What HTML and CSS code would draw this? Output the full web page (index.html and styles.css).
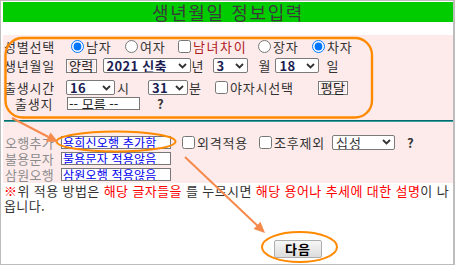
FILE: index.html
```html
<!DOCTYPE html>
<html lang="ko">
<head>
<meta charset="utf-8">
<title>생년월일 정보입력</title>
<link rel="stylesheet" href="styles.css">
</head>
<body>
<div class="frame">
  <div class="title">생년월일 정보입력</div>
  <div class="spacer"></div>
  <div class="panel">
    <div class="upper">
      <div class="row r1">
        <span class="lbl">성별선택</span>
        <div class="opts">
          <label class="opt"><input type="radio" name="sex" checked><span>남자</span></label>
          <label class="opt"><input type="radio" name="sex"><span>여자</span></label>
          <label class="opt"><input type="checkbox"><span class="dred">남녀차이</span></label>
          <label class="opt"><input type="radio" name="order"><span>장자</span></label>
          <label class="opt"><input type="radio" name="order" checked><span>차자</span></label>
        </div>
      </div>
      <div class="row r2">
        <span class="lbl">생년월일</span>
        <span class="tag">양력</span>
        <select class="sel s-year ml6"><option selected>2021 신축</option><option>2020 경자</option></select>
        <span class="unit ml1">년</span>
        <select class="sel s-mon ml8"><option selected>3</option><option>4</option></select>
        <span class="unit ml11">월</span>
        <select class="sel s-day ml4"><option selected>18</option><option>19</option></select>
        <span class="unit ml7">일</span>
      </div>
      <div class="row r3">
        <span class="lbl">출생시간</span>
        <select class="sel s-hour"><option selected>16</option><option>17</option></select>
        <span class="unit ml2">시</span>
        <select class="sel s-min ml18"><option selected>31</option><option>32</option></select>
        <span class="unit ml1">분</span>
        <label class="opt ml13"><input type="checkbox"><span>야자시선택</span></label>
        <span class="tag ml24">평달</span>
      </div>
      <div class="row r4">
        <span class="lbl lbl-c">출생지</span>
        <input class="box place" type="text" value="-- 모름 --" readonly>
        <span class="q ml17">?</span>
      </div>
    </div>
    <div class="rule"></div>
    <div class="lower">
      <div class="row l1">
        <span class="lbl2">오행추가</span>
        <input class="box link" type="text" value="용희신오행 추가함" readonly>
        <label class="opt ml11"><input type="checkbox"><span>외격적용</span></label>
        <label class="opt ml11"><input type="checkbox"><span>조후제외</span></label>
        <select class="sel s-sip ml7"><option selected>십성</option><option>신살</option></select>
        <span class="q ml12">?</span>
      </div>
      <div class="row l2">
        <span class="lbl2">불용문자</span>
        <input class="box link" type="text" value="불용문자 적용않음" readonly>
      </div>
      <div class="row l3">
        <span class="lbl2">삼원오행</span>
        <input class="box link" type="text" value="삼원오행 적용않음" readonly>
      </div>
    </div>
  </div>
  <p class="note"><span class="red">※</span>위 적용 방법은 <span class="red">해당 글자들을</span> 를 누르시면 <span class="red">해당 용어나 추세에 대한 설명</span>이 나옵니다.</p>
  <div class="btnrow"><button class="next" type="button">다음</button></div>
  <svg class="marks" width="455" height="266" viewBox="0 0 455 266" aria-hidden="true">
    <rect x="5.5" y="38" width="366.5" height="79.5" rx="17" ry="17" fill="none" stroke="#ff8a00" stroke-width="2.4"/>
    <ellipse cx="116" cy="141.5" rx="59.5" ry="10" fill="none" stroke="#ff8a00" stroke-width="2"/>
    <ellipse cx="299.5" cy="247" rx="37.5" ry="15" fill="none" stroke="#ff8a00" stroke-width="2"/>
    <line x1="12" y1="118" x2="48.5" y2="137" stroke="#f58a4c" stroke-width="2"/>
    <polygon points="58,142 45.9,141.4 50.6,132.5" fill="#f58a4c"/>
    <line x1="185" y1="157" x2="257.5" y2="225.8" stroke="#f58a4c" stroke-width="2"/>
    <polygon points="265,233 253.6,229 260.5,221.8" fill="#f58a4c"/>
  </svg>
</div>
</body>
</html>
```

FILE: styles.css
```css
* { box-sizing: border-box; }

body {
  margin: 0;
  background: #fff;
  color: #333;
  font-family: "Noto Sans CJK KR", "Noto Sans", sans-serif;
  font-size: 13px;
}

.frame {
  position: relative;
  width: 455px;
  height: 265px;
  border: 1px solid #bdbdbd;
  border-right-width: 2px;
  padding: 1px 0 0 2px;
}

.title {
  display: flex;
  align-items: center;
  justify-content: center;
  height: 20px;
  background: #00cc00;
  color: #3a3a3a;
  font-size: 18px;
  line-height: 18px;
  letter-spacing: 1.6px;
}

.spacer { height: 13px; }

.panel {
  height: 148px;
  background: #fdebeb;
}

.row {
  display: flex;
  align-items: center;
  white-space: nowrap;
}

.r1 { height: 23px; }
.r2 { height: 15px; }
.r3 { height: 15px; margin-top: 7px; }
.r4 { height: 13px; margin-top: 2px; }

.lbl {
  flex: none;
  width: 63px;
  padding-left: 1px;
  letter-spacing: 0.8px;
  line-height: 15px;
}
.lbl-c { padding-left: 12px; }

.lbl2 {
  flex: none;
  width: 58px;
  padding-left: 2px;
  color: #8c8c8c;
  letter-spacing: 0.3px;
  line-height: 15px;
}

.opts {
  display: grid;
  grid-template-columns: 54px 53px 80px 54px auto;
  padding-left: 5px;
}

.opt {
  display: inline-flex;
  align-items: center;
  letter-spacing: 0.8px;
  line-height: 15px;
}
.opt input {
  width: 13px;
  height: 13px;
  margin: 0 2px 0 0;
  flex: none;
}
.dred { color: #b01c1c; letter-spacing: 1.6px; }

.unit { letter-spacing: 1px; line-height: 15px; }

.tag {
  display: inline-block;
  height: 14px;
  padding: 0 2px;
  border: 1px solid #7b7b7b;
  box-shadow: inset 0 0 0 1px #fff;
  background: #fdebeb;
  color: #222;
  line-height: 12px;
  letter-spacing: 0.3px;
}

.sel {
  -webkit-appearance: none;
  appearance: none;
  height: 15px;
  padding: 0 12px 0 3px;
  border: 1px solid #7a7a7a;
  border-radius: 2px;
  background: #fff url("data:image/svg+xml,%3Csvg xmlns='http://www.w3.org/2000/svg' width='9' height='6' viewBox='0 0 9 6'%3E%3Cpath d='M1 1l3.5 3.5L8 1' fill='none' stroke='%23333' stroke-width='1.8'/%3E%3C/svg%3E") no-repeat right 3px center;
  color: #1d1d52;
  font-family: "Noto Sans CJK KR", "Noto Sans", sans-serif;
  font-size: 13px;
  font-weight: bold;
  line-height: 13px;
  letter-spacing: 0.3px;
}
.s-year { width: 88px; }
.s-mon { width: 35px; }
.s-day { width: 44px; }
.s-hour { width: 49px; }
.s-min { width: 40px; }
.s-sip { width: 63px; font-weight: normal; color: #333; letter-spacing: 1px; }

.box {
  height: 13px;
  padding: 0 0 0 1px;
  border: 1px solid #777;
  background: #fff;
  font-family: "Noto Sans CJK KR", "Noto Sans", sans-serif;
  font-size: 13px;
  line-height: 11px;
  outline: none;
}
.place { width: 73px; margin-left: 1px; color: #222; }
.link { width: 110px; color: #0000ee; font-size: 12px; letter-spacing: 0.2px; }

.q { font-weight: bold; color: #333; line-height: 13px; }

.rule {
  margin: 10px 0 0 1px;
  height: 2px;
  border-top: 1px solid #006e6e;
  border-bottom: 1px solid #3e9f9f;
}

.lower { padding-top: 11px; }
.l1 { height: 18px; }
.l2 { height: 15px; }
.l3 { height: 17px; }

.note {
  margin: 0;
  padding-left: 1px;
  line-height: 15px;
  letter-spacing: 0.4px;
  color: #333;
}
.red { color: #ff0000; }

.btnrow {
  margin-top: 26px;
  padding-left: 271px;
}
.next {
  width: 48px;
  height: 18px;
  padding: 0;
  border: 1px solid #adadad;
  border-radius: 2px;
  background: linear-gradient(#f7f7f7, #dcdcdc);
  color: #000;
  font-family: "Noto Sans CJK KR", "Noto Sans", sans-serif;
  font-size: 13px;
  font-weight: bold;
  line-height: 16px;
  letter-spacing: 1px;
}

.marks {
  position: absolute;
  left: -1px;
  top: -1px;
  pointer-events: none;
}

.ml1 { margin-left: 1px; }
.ml2 { margin-left: 2px; }
.ml4 { margin-left: 4px; }
.ml6 { margin-left: 6px; }
.ml7 { margin-left: 7px; }
.ml8 { margin-left: 8px; }
.ml11 { margin-left: 11px; }
.ml12 { margin-left: 12px; }
.ml13 { margin-left: 13px; }
.ml17 { margin-left: 17px; }
.ml18 { margin-left: 18px; }
.ml24 { margin-left: 24px; }
```
